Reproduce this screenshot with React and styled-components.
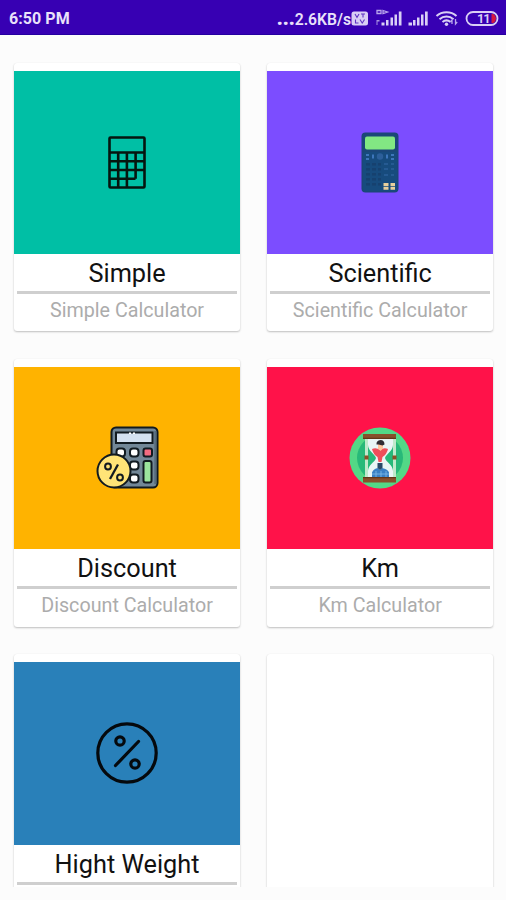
import React from "react";
import styled, { createGlobalStyle } from "styled-components";

const GlobalStyle = createGlobalStyle`
  * {
    box-sizing: border-box;
  }
  body {
    margin: 0;
    background-color: #fcfcfc;
    font-family: Roboto, "Liberation Sans", sans-serif;
  }
`;

const Screen = styled.div`
  height: 900px;
  overflow: hidden;
`;

const StatusBar = styled.header`
  display: flex;
  justify-content: space-between;
  align-items: center;
  height: 35px;
  padding: 3px 7px 0 9px;
  background-color: #3700b3;
  border-bottom: 1px solid #2500a0;
  color: #e9e1fa;
`;

const Clock = styled.span`
  font-size: 16px;
  font-weight: 700;
  letter-spacing: 0.05px;
`;

const StatusIcons = styled.div`
  display: flex;
  align-items: center;
`;

const Speed = styled.span`
  font-size: 15.7px;
  font-weight: 600;
`;

const Dots = styled.span`
  font-size: 20px;
  font-weight: 900;
  line-height: 1;
  letter-spacing: -0.1px;
`;

const Grid = styled.main`
  display: grid;
  grid-template-columns: 225.3px 225.3px;
  grid-auto-rows: 268px;
  column-gap: 27.8px;
  row-gap: 27.5px;
  height: 852px;
  padding: 28px 13px 0 14.4px;
  overflow: hidden;
`;

const Card = styled.section`
  display: flex;
  flex-direction: column;
  padding-top: 8px;
  border-radius: 3px;
  background-color: #fff;
  box-shadow: 0 1px 2px rgba(0, 0, 0, 0.24), 0 0 1px rgba(0, 0, 0, 0.06);
`;

const Tile = styled.div`
  display: flex;
  align-items: center;
  justify-content: center;
  height: 182.5px;
  background-color: ${(props) => props.$color};
`;

const Title = styled.h2`
  height: 37px;
  margin: 0;
  line-height: 40px;
  font-size: 25.3px;
  font-weight: 400;
  text-align: center;
  color: #111;
`;

const Divider = styled.hr`
  width: 220px;
  height: 3px;
  margin: 0 auto;
  border: none;
  background-color: #cfcfcf;
`;

const Subtitle = styled.p`
  margin: 0;
  line-height: 33px;
  font-size: 19.7px;
  text-align: center;
  color: #acacac;
`;

function SignalIcons() {
  return (
    <svg width="148" height="22" viewBox="0 0 148 22" fill="#d9cff5">
      {/* vo-lte badge */}
      <rect x="0.500" y="3.500" width="16.500" height="14" rx="2.500" />
      <path
        d="M4 6l2 3.500L8 6M10 6h4M12 6v3.500M4.500 11.500v3.500h3M9 11.500l2.500 4M13.500 11.500l-2.500 4"
        fill="none"
        stroke="#3700b3"
        strokeWidth="1.1"
        opacity=".75"
      />
      {/* first sim */}
      <path
        d="M26 2.500h4v3h-4zM32 2.500l4.500 1.500-4.500 1.500z"
        fill="none"
        stroke="#b9a6ec"
        strokeWidth="1.300"
      />
      <path d="M25.500 12h3v1.500h-2V17h-1z" opacity=".7" />
      <path d="M30.500 14.500h3V17.500h-3zM35 12h2.500v5.500H35zM39.500 9.500H42v8h-2.500zM43.500 6.500H46v11h-2.500zM47.800 3.500h2.700v14h-2.700z" />
      {/* second sim */}
      <path d="M57.500 14.500h3.500v3h-3.500zM62 12h2.500v5.500H62zM66 9.500h2.500v8H66zM70 6.500h2.500v11H70zM74 3.500h2.700v14H74z" />
      {/* wifi */}
      <g fill="none" stroke="#d9cff5" strokeWidth="2">
        <path d="M85.500 8c5.500-5 14.500-5 20 0" />
        <path d="M88.500 11.200c4-3.600 10-3.600 14 0" />
        <path d="M91.500 14c2.500-2 5.500-2 8 0" />
      </g>
      <circle cx="95.500" cy="16.300" r="1.700" />
      <path d="M101 16v-4l-1.700 2M104.500 11v5l1.700-2" fill="none" stroke="#b9a6ec" strokeWidth="1.300" />
      {/* battery */}
      <rect x="115.500" y="4" width="31" height="13" rx="6.500" fill="none" stroke="#d9cff5" strokeWidth="1.800" />
      <path d="M140.500 6h2q2.500 1.500 2.500 4.500t-2.500 4.500h-2z" fill="#d5173f" />
      <text x="126" y="15" fontSize="13" fontWeight="600" letterSpacing="-1.2" fontFamily="Roboto, sans-serif">
        11
      </text>
    </svg>
  );
}

function SimpleIcon() {
  return (
    <svg width="38" height="53" viewBox="0 0 38 53" fill="none" stroke="#05150f" strokeWidth="2.600">
      <rect x="1.500" y="1.500" width="35" height="50" rx="1" />
      <path d="M1.500 16.500h35M1.500 25.300h35M1.500 34h35M1.500 42.800h26M10.200 16.500v35M18.900 16.500v35M27.600 16.500v26.300" />
    </svg>
  );
}

function ScientificIcon() {
  return (
    <svg width="38" height="61" viewBox="0 0 38 61">
      <rect x="0.500" y="0.500" width="37" height="60" rx="4" fill="#1b4778" />
      <rect x="2" y="20" width="34" height="39" rx="2" fill="#174b7d" />
      <rect x="4" y="4.500" width="30" height="13" rx="2" fill="#82e783" />
      <g fill="#3d76bb">
        <path d="M5 22h3v2H5zM5 26h3v2H5zM11 22.500h2v4h-2zM25 22.500h2v4h-2zM30 22h3v2h-3zM30 26h3v2h-3z" />
        <circle cx="19" cy="24.500" r="3.200" fill="#2c5f9a" />
      </g>
      <g fill="#16416f">
        {[31, 36, 41, 46, 51].map((y) => (
          <path key={y} d={`M5 ${y}h4v2.500H5zM11 ${y}h4v2.500h-4zM17 ${y}h3v2.500h-3z`} />
        ))}
      </g>
      <path d="M23 31h4v2h-4zM30 31h3v2h-3zM23 36h4v2h-4zM30 36h3v2h-3zM23 42h4v2h-4zM30 42h3v2h-3z" fill="#255a92" />
      <path d="M22.500 51h5v3h-5zM22.500 54.800h5v3h-5zM29.500 51H34v3h-4.500zM29.500 54.800H34v3h-4.500z" fill="#e8cf9c" />
    </svg>
  );
}

function DiscountIcon() {
  return (
    <svg width="63" height="63" viewBox="0 0 63 63" stroke="#111a20" strokeWidth="2">
      <rect x="15.500" y="1.500" width="46" height="60" rx="4.500" fill="#728797" />
      <path d="M59.300 5v53" stroke="#566b7b" />
      <rect x="20" y="6.500" width="36.500" height="10.500" fill="#d4e1f0" />
      <path d="M34 6.500v1.500M38 6.500v1.500" stroke="#fff" />
      <g fill="#fff">
        <rect x="20.500" y="22.500" width="8.500" height="8" rx="3" />
        <rect x="34" y="22.500" width="8.500" height="8" rx="3" />
        <rect x="47.500" y="22.500" width="8.500" height="8" rx="2" fill="#f36c80" />
        <rect x="34" y="35.500" width="8.500" height="8" rx="3" />
        <rect x="34" y="48.500" width="8.500" height="8" rx="3" />
        <rect x="47.500" y="35" width="8" height="21.500" rx="2" fill="#9be49d" />
      </g>
      <circle cx="18" cy="45" r="16.500" fill="#ffe477" />
      <path d="M22 38.500l-8 14.500" strokeWidth="2.300" />
      <circle cx="12" cy="40.500" r="2.900" fill="none" />
      <circle cx="24" cy="51.500" r="2.900" fill="none" />
    </svg>
  );
}

function KmIcon() {
  return (
    <svg width="62" height="62" viewBox="0 0 62 62">
      <circle cx="31" cy="31" r="30.500" fill="#53d886" />
      <circle cx="31" cy="31" r="23" fill="#27b979" />
      <path d="M19 11h25v7c0 6-7 9-8 13 1 4 8 7 8 13v7H19v-7c0-6 7-9 8-13-1-4-8-7-8-13z" fill="#e9f5f5" />
      <path d="M17.500 11v40M45.500 11v40" stroke="#bfe9cb" strokeWidth="3" />
      <path d="M15.500 28.500h4v4h-4zM43.500 28.500h4v4h-4z" fill="#8e4f27" />
      <path d="M23 22q4-2 8 1 4-3 8-1-1 5-5.500 8L32.500 35h-3L28.500 30Q24 27 23 22z" fill="#f04f5a" />
      <path d="M29 16.500h5v5L31.500 24 29 21.500z" fill="#ffc49d" />
      <path d="M27.500 17.500q-.5-4 4-4.500 4 0 4 4.500l-2 1-4-1z" fill="#302c32" />
      <path d="M23 50v-4.500q1.500-4 6-4.500l2 2 2-2q6 1 7 4.500V50z" fill="#3980c4" />
      <path d="M28.500 36h5v5L31 43l-2.500-2z" fill="#294969" />
      <path d="M27 44v6M32 44v6M37 44v6M23 47h17" stroke="#82bce8" strokeWidth=".8" />
      <path d="M14 7h33v5H14zM14 50h33v5.500H14z" fill="#88502b" />
      <path d="M14 10.700h33V12H14zM14 50h33v1.300H14z" fill="#643719" />
    </svg>
  );
}

function PercentIcon() {
  return (
    <svg width="62" height="62" viewBox="0 0 62 62" fill="none" stroke="#05090d" strokeWidth="3.200" strokeLinecap="round">
      <circle cx="31" cy="31" r="29.200" />
      <path d="M42.500 19.500l-23 24" />
      <circle cx="24" cy="19" r="4.200" />
      <circle cx="39" cy="42" r="4.200" />
    </svg>
  );
}

const calculators = [
  { title: "Simple", subtitle: "Simple Calculator", color: "#00bfa5", Icon: SimpleIcon },
  { title: "Scientific", subtitle: "Scientific Calculator", color: "#7c4dff", Icon: ScientificIcon },
  { title: "Discount", subtitle: "Discount Calculator", color: "#ffb300", Icon: DiscountIcon },
  { title: "Km", subtitle: "Km Calculator", color: "#ff1249", Icon: KmIcon },
  { title: "Hight Weight", color: "#2980b9", Icon: PercentIcon },
];

export default function App() {
  return (
    <Screen>
      <GlobalStyle />
      <StatusBar>
        <Clock>6:50 PM</Clock>
        <StatusIcons>
          <Speed>
            <Dots>...</Dots>2.6KB/s
          </Speed>
          <SignalIcons />
        </StatusIcons>
      </StatusBar>
      <Grid>
        {calculators.map(({ title, subtitle, color, Icon }) => (
          <Card key={title}>
            <Tile $color={color}>
              <Icon />
            </Tile>
            <Title>{title}</Title>
            <Divider />
            {subtitle && <Subtitle>{subtitle}</Subtitle>}
          </Card>
        ))}
        <Card />
      </Grid>
    </Screen>
  );
}
